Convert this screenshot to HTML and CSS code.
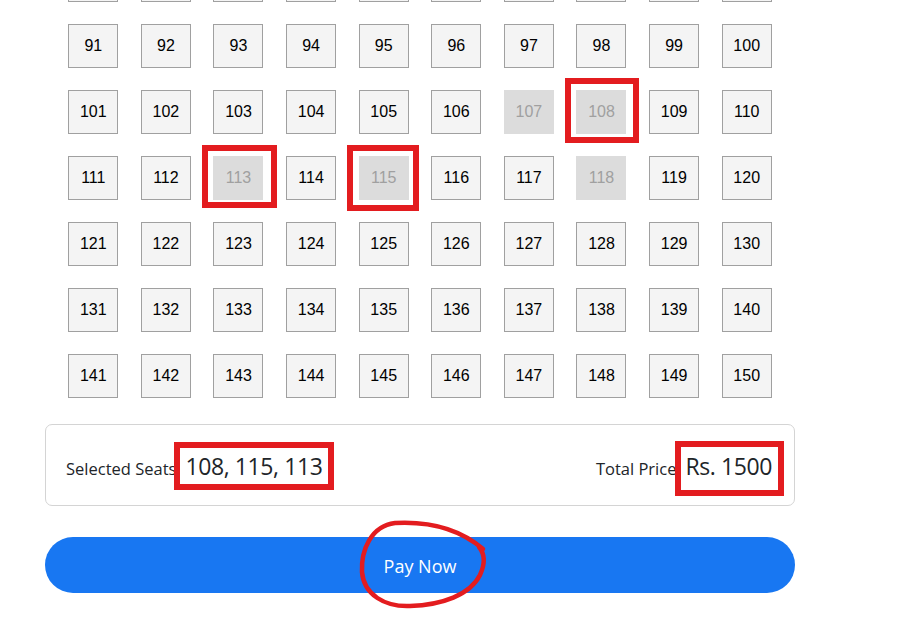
FILE: index.html
```html
<!DOCTYPE html>
<html>
<head>
<meta charset="utf-8">
<link rel="stylesheet" href="styles.css">
</head>
<body>
<div class="page">
  <div class="seats" id="seats"></div>
  <div class="summary">
    <div class="sum-item"><span class="label">Selected Seats</span><span class="value">108, 115, 113</span></div>
    <div class="sum-item"><span class="label">Total Price</span><span class="value">Rs. 1500</span></div>
  </div>
  <button class="pay">Pay Now</button>
</div>
<svg class="marks" width="916" height="617" viewBox="0 0 916 617">
  <g fill="none" stroke="#e31c1f" stroke-width="6">
    <rect x="568" y="81" width="68" height="59"/>
    <rect x="205" y="148" width="69" height="57"/>
    <rect x="350" y="148" width="66" height="60"/>
    <rect x="177" y="445" width="154" height="42"/>
    <rect x="678" y="444" width="103" height="49"/>
  </g>
  <path d="M 483 549 C 462 531, 432 521, 395 523 C 371 526, 361 550, 362 572 C 364 595, 385 607, 410 606 C 442 605, 470 595, 480 575 C 486 562, 484 553, 479 547" fill="none" stroke="#e31c1f" stroke-width="4.5" stroke-linecap="round"/>
</svg>
<script>
  var el = document.getElementById('seats');
  var gray = [107, 108, 113, 115, 118];
  for (var i = 81; i <= 150; i++) {
    var d = document.createElement('div');
    d.className = 'seat' + (gray.indexOf(i) >= 0 ? ' taken' : '') + (i <= 90 ? ' offscreen' : '');
    d.textContent = i;
    el.appendChild(d);
  }
</script>
</body>
</html>
```
FILE: styles.css
```css
html, body {
  margin: 0;
  padding: 0;
  background: #fff;
}
.page {
  width: 750px;
  margin-left: 45px;
}
.seats {
  margin-top: -42px;
  padding: 0 12px;
  display: grid;
  grid-template-columns: repeat(10, 1fr);
  row-gap: 22px;
  justify-items: center;
}
.seat {
  box-sizing: border-box;
  width: 50px;
  height: 44px;
  border: 1px solid #a0a0a0;
  background: #f4f4f4;
  display: flex;
  align-items: center;
  justify-content: center;
  font-family: "Liberation Sans", Arial, sans-serif;
  font-size: 16px;
  color: #000;
}
.seat.offscreen {
  color: transparent;
}
.seat.taken {
  background: #dcdcdc;
  border-color: #dcdcdc;
  color: #a0a0a0;
}
.summary {
  box-sizing: border-box;
  margin-top: 26px;
  height: 82px;
  border: 1px solid #d4d4d4;
  border-radius: 7px;
  padding: 2px 22px 0 20px;
  display: flex;
  justify-content: space-between;
  align-items: center;
  font-family: "Open Sans", "Noto Sans", sans-serif;
  color: #212529;
}
.sum-item {
  display: flex;
  align-items: baseline;
}
.label {
  font-size: 16.5px;
  padding-top: 3px;
}
.value {
  font-size: 23px;
  letter-spacing: -0.4px;
  margin-left: 9px;
}
.pay {
  display: block;
  box-sizing: border-box;
  width: 750px;
  height: 56px;
  margin-top: 31px;
  border: none;
  border-radius: 28px;
  background: #1877f2;
  color: #fff;
  font-family: "Open Sans", "Noto Sans", sans-serif;
  font-size: 18px;
  padding: 2px 0 0 0;
}
.marks {
  position: absolute;
  left: 0;
  top: 0;
  pointer-events: none;
}
```
